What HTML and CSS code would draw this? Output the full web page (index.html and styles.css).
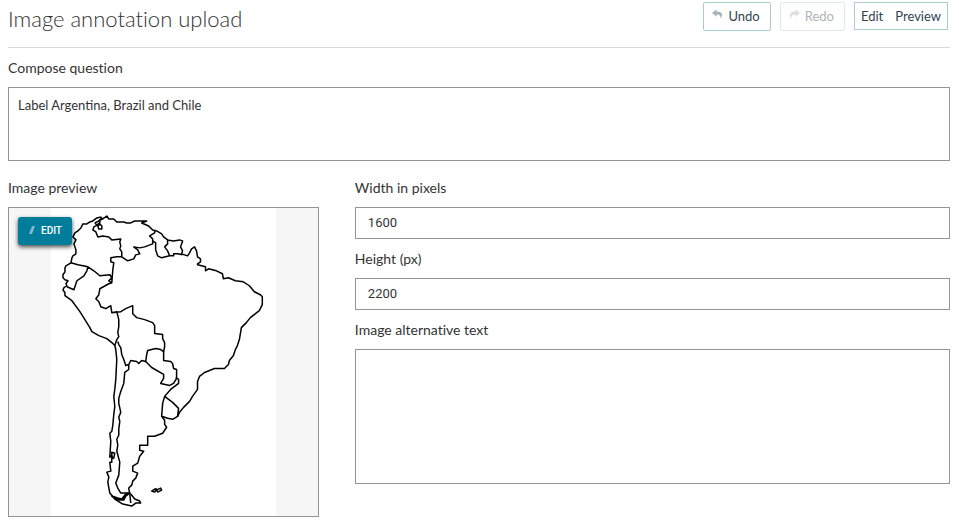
FILE: index.html
```html
<!DOCTYPE html>
<html lang="en">
<head>
    <meta charset="UTF-8">
    <meta name="viewport" content="width=device-width, initial-scale=1.0">
    <title>Image annotation upload</title>
    <link rel="stylesheet" href="styles.css">
</head>
<body>
    <header class="header">
        <h1>Image annotation upload</h1>
        <div class="toolbar">
            <button type="button" class="button">
                <svg class="icon" viewBox="0 0 12 10"><path d="M5 0 L0 4 L5 8 V5.500 C8 5.300 9.500 6.500 9.500 10 C12.500 6 11 2.300 5 2.300 Z"/></svg>
                Undo
            </button>
            <button type="button" class="button" disabled>
                <svg class="icon" viewBox="0 0 12 10"><path d="M7 0 L12 4 L7 8 V5.500 C4 5.300 2.500 6.500 2.500 10 C-.5 6 1 2.300 7 2.300 Z"/></svg>
                Redo
            </button>
            <div class="tabs">
                <button type="button">Edit</button>
                <button type="button">Preview</button>
            </div>
        </div>
    </header>

    <main>
        <label for="question">Compose question</label>
        <textarea id="question" class="question">Label Argentina, Brazil and Chile</textarea>

        <div class="columns">
            <section>
                <h2>Image preview</h2>
                <div class="preview">
                    <svg class="map" viewBox="51 208 225 309" role="img" aria-label="Map of South America">
                        <!-- west coast down to Cape Horn -->
                        <path d="M101 217 L102 218 L99 221 L95 223 M101 217 L97 218 L93 221 L90 222 L87 224 L83 224 L81 228 L78 231 L75 233 L73 237 L76 240 L75 242 L74 244 L75 247 L76 250 L76 254 L73 256 L72 258 L71 263 L66 266 L65 268 L65 272 L63 275 L63 278 L65 280 L68 281 L66 284 L67 286 L64 288 L63 290 L65 293 L65 296 L72 301 L80 312 L90 328 L92 332 L99 336 L107 339 L112 343 L115 346 L116 350 L117 360 L116 380 L115 390 L114 397 L115 407 L114 415 L113 426 L112 432 L110 434 L111 442 L110 458 L112 456 L113 459 L114 459 L115 454 L112 453 L112 463 L110 463 L111 472 L107 473 L109 478 L108 483 L110 494 L115 500 L123 505 L132 507 L136 504 L141 504 L140 502 L135 500 L131 495"/>
                        <!-- north and east coast -->
                        <path d="M95 223 L97 225 L100 223 L100 220 L103 219 L107 216 L109 219 L114 219 L117 222 L124 222 L127 223 L131 223 L135 221 L147 221 L142 223 L149 226 L153 230 L157 231 L162 234 L164 237 L168 240 L174 241 L180 240 L183 241 L181 247 L183 251 L182 254 L188 256 L190 253 L192 249 L195 247 L197 251 L198 257 L201 259 L201 262 L198 264 L198 265 L206 267 L206 271 L209 269 L217 271 L223 274 L224 279 L229 278 L236 281 L244 282 L250 286 L255 292 L261 295 L263 297 L263 305 L260 311 L251 318 L247 323 L242 328 L240 340 L238 346 L236 350 L234 356 L230 361 L229 365 L225 369 L215 369 L205 373 L200 377 L198 382 L198 390 L193 397 L190 402 L184 408 L180 413 L178 417 L173 420 L168 419 L162 417"/>
                        <path d="M100 224 L102 226 L102 229 L99 229 L98 226 Z"/>
                        <!-- Venezuela -->
                        <path d="M98 225 L94 227 L93 230 L96 232 L98 237 L103 236 L109 237 L112 240 L121 239 L120 242 L121 246 L120 249 L122 252 L122 257 L128 261 L134 259 L136 255 L140 254 L138 250 L134 247 L140 248 L145 247 L153 244 L153 239 L150 236 L155 233 L155 230"/>
                        <!-- Guyanas -->
                        <path d="M153 241 L156 243 L156 250 L158 256 L162 258 L170 256 L168 251 L165 247 L168 244 L168 240 M170 256 L174 256 L174 254 L178 254 L183 255"/>
                        <!-- Colombia and Ecuador -->
                        <path d="M122 257 L117 257 L111 258 L111 262 L114 263 L113 270 L112 283 L109 281 L112 278 L110 275 L100 276 L94 271 L88 267 L78 265 L71 263 M88 267 L87 271 L84 276 L77 281 L74 290 L67 287"/>
                        <!-- Peru and Bolivia -->
                        <path d="M112 283 L109 284 L100 289 L99 295 L96 299 L99 302 L101 307 L106 309 L111 306 L112 313 L117 312 L119 320 L119 327 L118 333 L119 337 L117 340 L115 346 M112 313 L121 312 L126 309 L133 306 L133 314 L137 318 L145 320 L153 323 L155 326 L155 334 L163 335 L163 339 L165 343 L165 347 L164 352 L161 350 L156 349 L148 351 L147 355 L146 362 L142 361 L139 364 L137 362 L131 361 L129 365 L126 366 L124 360 L122 355 L121 348 L119 345 L118 342"/>
                        <!-- Paraguay and Uruguay -->
                        <path d="M164 352 L164 361 L171 362 L173 364 L174 369 L177 370 L177 379 L174 384 L170 386 L161 384 L164 379 L164 375 L152 368 L146 362 M176 378 L179 380 L179 384 L171 390 L165 397 L163 404 L162 417 L165 421 L165 425 L167 428 L163 434 L155 437 L148 437 L148 446 L140 446 L140 451 L144 452 L140 457 L138 464 L133 467 L133 472 L138 474 L136 479 L133 482 L132 486 L129 489 L130 495 M165 397 L173 403 L179 409 L178 417"/>
                        <!-- Chile and Argentina border -->
                        <path d="M129 365 L129 370 L125 373 L124 384 L121 392 L119 399 L119 404 L121 413 L119 418 L120 422 L119 430 L119 436 L117 440 L118 446 L117 452 L120 463 L119 476 L116 484 L118 489 L121 494 L130 494 L131 504"/>
                        <path class="land" d="M112 497 L118 499 L122 500 L126 495 L130 494 L126 497 L124 501 L118 501 Z"/>
                        <!-- Falkland Islands -->
                        <path d="M152 492 L155 490 L157 490 L155 493 Z M157 491 L161 489 L162 491 L158 493 Z"/>
                    </svg>
                    <button type="button" class="edit-button">
                        <svg viewBox="0 0 6 8"><path d="M3 0 L6 0 L3 8 L0 8 Z"/></svg>
                        EDIT
                    </button>
                </div>
            </section>

            <section>
                <label for="width">Width in pixels</label>
                <input type="text" id="width" value="1600">
                <label for="height">Height (px)</label>
                <input type="text" id="height" value="2200">
                <label for="alt">Image alternative text</label>
                <textarea id="alt" class="alt"></textarea>
            </section>
        </div>
    </main>
</body>
</html>
```
FILE: styles.css
```css
* {
    box-sizing: border-box;
}
body {
    margin: 0;
    padding: 0 9px 12px 8px;
    font-family: Lato, sans-serif;
    font-size: 14px;
    font-variant-ligatures: none;
    color: #333;
    background: white;
}
.header {
    display: flex;
    justify-content: space-between;
    align-items: flex-start;
    height: 48px;
    padding-top: 2px;
    border-bottom: 1px solid #d8d8d8;
}
h1 {
    margin: 3px 0 0;
    font-size: 22px;
    line-height: 28px;
    font-weight: 300;
}
.toolbar {
    display: flex;
    gap: 9px;
    padding-right: 2px;
}
button {
    font-family: inherit;
    cursor: pointer;
}
.button {
    display: flex;
    align-items: center;
    gap: 5px;
    height: 29px;
    padding: 0 10px 1px 8px;
    font-size: 13px;
    color: #2f4550;
    background: white;
    border: 1px solid #a9cdd1;
    border-radius: 2px;
}
.button:disabled {
    opacity: 0.4;
    cursor: default;
}
.icon {
    width: 11px;
    height: 10px;
    margin-bottom: 4px;
    fill: #a5b4b5;
}
.tabs {
    display: flex;
    gap: 12px;
    height: 28px;
    padding: 0 6px;
    border: 1px solid #a9cdd1;
}
.tabs button {
    padding: 0;
    font-size: 13px;
    color: #2f4550;
    background: none;
    border: none;
}
label,
h2 {
    display: block;
    margin: 0;
    padding-bottom: 9px;
    font-size: 14px;
    line-height: 20px;
    font-weight: 400;
}
main {
    padding-top: 10px;
}
input,
textarea {
    display: block;
    width: 100%;
    color: #333;
    background: white;
    border: 1px solid #949494;
    border-radius: 0;
    resize: none;
}
input {
    height: 32px;
    margin-bottom: 10px;
    padding: 0 12px 2px;
    font-family: Roboto, sans-serif;
    font-size: 13px;
}
textarea {
    padding: 8px 9px;
    font-family: inherit;
    font-size: 13px;
    line-height: 18px;
}
.question {
    height: 74px;
}
.alt {
    height: 135px;
}
.columns {
    display: grid;
    grid-template-columns: 33% 1fr;
    gap: 36px;
    padding-top: 17px;
}
.preview {
    position: relative;
    height: 310px;
    background: #f6f6f6;
    border: 1px solid #949494;
}
.map {
    display: block;
    height: 100%;
    margin: 0 auto;
    background: white;
    fill: none;
    stroke: black;
    stroke-width: 1.5;
    stroke-linejoin: round;
}
.map .land {
    fill: black;
}
.edit-button {
    position: absolute;
    top: 9px;
    left: 9px;
    display: flex;
    align-items: center;
    gap: 6px;
    height: 28px;
    padding: 0 10px 2px 11px;
    font-family: Roboto, sans-serif;
    font-size: 10px;
    font-weight: 500;
    color: white;
    background: #007d9a;
    border: none;
    border-radius: 3px;
    box-shadow: 0 2px 4px rgba(0, 0, 0, 0.7);
}
.edit-button svg {
    width: 6px;
    height: 8px;
    fill: #7fbdcc;
}
```
